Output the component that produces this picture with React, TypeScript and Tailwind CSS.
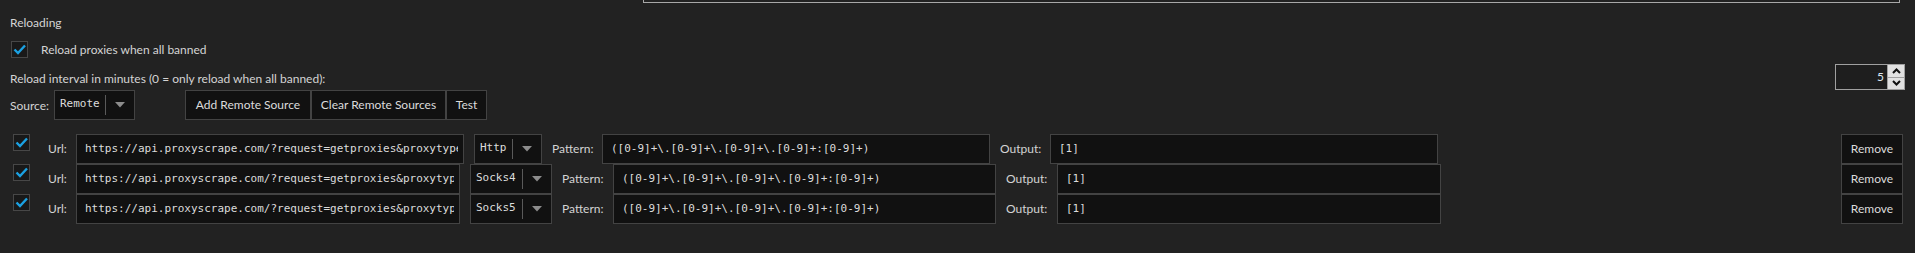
import React from "react";

const UI = "[font-family:Lato,'Noto_Sans',sans-serif]";
const MONO = "[font-family:'DejaVu_Sans_Mono',monospace]";

function Check() {
  return (
    <div className="w-[17px] h-[17px] border border-[#474747] bg-[#191919] shrink-0">
      <svg width="15" height="15" viewBox="0 0 15 15">
        <path d="M2.5 7.5 L6 11 L13 3.5" fill="none" stroke="#1ba1e2" strokeWidth="2.4" />
      </svg>
    </div>
  );
}

function Combo({ text, w }: { text: string; w: string }) {
  return (
    <div className={`h-[30px] border border-[#434343] bg-[#111111] flex items-center shrink-0 ${w}`}>
      <span className={`${MONO} text-[11px] text-[#dcdcdc] pl-[5px] flex-1 leading-[28px] -mt-[2px]`}>{text}</span>
      <div className="w-px h-[20px] bg-[#5a5a5a]" />
      <div className="w-[28px] flex justify-center items-center">
        <svg width="10" height="6" viewBox="0 0 10 6">
          <path d="M0 0 L10 0 L5 5.5Z" fill="#8c8c8c" />
        </svg>
      </div>
    </div>
  );
}

function Box({ text, w }: { text: string; w: string }) {
  return (
    <div
      className={`h-[30px] border border-[#434343] bg-[#111111] pl-[8px] pr-[5px] overflow-hidden whitespace-nowrap shrink-0 ${w}`}
    >
      <div className={`${MONO} text-[11px] text-[#dcdcdc] leading-[27px] overflow-hidden`}>{text}</div>
    </div>
  );
}

function Btn({ text, w }: { text: string; w: string }) {
  return (
    <div
      className={`h-[30px] border border-[#434343] bg-[#111111] flex items-center justify-center text-[12px] text-[#dcdcdc] shrink-0 ${w}`}
    >
      {text}
    </div>
  );
}

const URL = "https://api.proxyscrape.com/?request=getproxies&proxytype";

const rows = [
  { type: "Http", comboW: "w-[68px]", urlW: "w-[388px]", labW: "w-[60px]", patW: "w-[388px]", outW: "w-[388px]" },
  { type: "Socks4", comboW: "w-[82px]", urlW: "w-[384px]", labW: "w-[61px]", patW: "w-[383px]", outW: "w-[384px]" },
  { type: "Socks5", comboW: "w-[82px]", urlW: "w-[384px]", labW: "w-[61px]", patW: "w-[383px]", outW: "w-[384px]" },
];

export default function App() {
  return (
    <div className={`w-[1915px] h-[253px] bg-[#222222] overflow-hidden text-[#d4d4d4] ${UI}`}>
      <div className="h-[3px] ml-[643px] w-[1257px] border-x border-b border-[#a8a8a8]" />

      <div className="mt-[12px] h-[16px] leading-[16px] text-[12px] pl-[10px]">Reloading</div>

      <div className="mt-[10px] h-[17px] flex items-center pl-[11px]">
        <Check />
        <span className="ml-[13px] text-[12px] leading-[16px]">Reload proxies when all banned</span>
      </div>

      <div className="mt-[6px] h-[26px] flex items-start">
        <span className="pl-[10px] pt-[7px] text-[12px] leading-[16px]">
          Reload interval in minutes (0 = only reload when all banned):
        </span>
        <div className="ml-auto mr-[10px] w-[70px] h-[26px] border border-[#a0a0a0] bg-[#1e1e1e] flex">
          <div className="flex-1 text-right pr-[3px] text-[12px] leading-[24px] text-[#dde8f2]">5</div>
          <div className="w-[17px] flex flex-col gap-[1px] bg-[#a0a0a0] pl-px">
            <div className="flex-1 bg-[#e1e1e1] flex items-center justify-center">
              <svg width="9" height="6" viewBox="0 0 9 6">
                <path d="M1 5 L4.5 1.5 L8 5" fill="none" stroke="#111" strokeWidth="2" />
              </svg>
            </div>
            <div className="flex-1 bg-[#e1e1e1] flex items-center justify-center">
              <svg width="9" height="6" viewBox="0 0 9 6">
                <path d="M1 1 L4.5 4.5 L8 1" fill="none" stroke="#111" strokeWidth="2" />
              </svg>
            </div>
          </div>
        </div>
      </div>

      <div className="h-[30px] flex items-center">
        <span className="w-[54px] pl-[10px] text-[12px] pt-[2px]">Source:</span>
        <Combo text="Remote" w="w-[81px]" />
        <div className="ml-[50px] flex">
          <Btn text="Add Remote Source" w="w-[126px]" />
          <Btn text="Clear Remote Sources" w="w-[135px]" />
          <Btn text="Test" w="w-[41px]" />
        </div>
      </div>

      <div className="mt-[14px] flex flex-col">
        {rows.map((r, i) => (
          <div key={i} className="flex items-start h-[30px] pl-[13px]">
            <Check />
            <div className="w-[46px] pl-[18px] h-[30px] flex items-center text-[12px] shrink-0">Url:</div>
            <Box text={URL} w={r.urlW} />
            <div className="ml-[10px]">
              <Combo text={r.type} w={r.comboW} />
            </div>
            <div className={`${r.labW} pl-[10px] h-[30px] flex items-center text-[12px] shrink-0`}>Pattern:</div>
            <Box text="([0-9]+\.[0-9]+\.[0-9]+\.[0-9]+:[0-9]+)" w={r.patW} />
            <div className={`${r.labW} pl-[10px] h-[30px] flex items-center text-[12px] shrink-0`}>Output:</div>
            <Box text="[1]" w={r.outW} />
            <div className="ml-auto mr-[12px]">
              <Btn text="Remove" w="w-[62px]" />
            </div>
          </div>
        ))}
      </div>
    </div>
  );
}
